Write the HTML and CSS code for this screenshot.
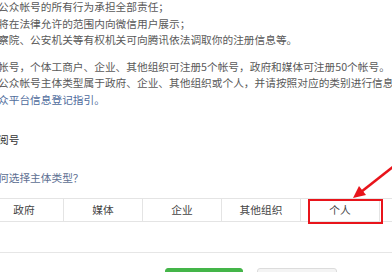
FILE: index.html
```html
<!DOCTYPE html>
<html lang="zh-CN">
    <head>
        <meta charset="UTF-8">
        <title>帐号类型</title>
        <link rel="stylesheet" href="styles.css">
    </head>
    <body>
        <div class="page">
            <p class="notice">
                公众帐号的所有行为承担全部责任；<br>
                将在法律允许的范围内向微信用户展示；<br>
                察院、公安机关等有权机关可向腾讯依法调取你的注册信息等。
            </p>
            <p class="notice">
                帐号，个体工商户、企业、其他组织可注册5个帐号，政府和媒体可注册50个帐号。<br>
                公众帐号主体类型属于政府、企业、其他组织或个人，并请按照对应的类别进行信息登记。<br>
                <a class="link" href="#">众平台信息登记指引。</a>
            </p>

            <h3 class="section-title">阅号</h3>
            <a class="help" href="#">何选择主体类型？</a>

            <div class="types">
                <div class="type">政府</div>
                <div class="type">媒体</div>
                <div class="type">企业</div>
                <div class="type">其他组织</div>
                <div class="type">个人</div>
            </div>

            <div class="actions">
                <button class="btn btn-primary">继续</button>
                <button class="btn btn-default">返回</button>
            </div>
        </div>

        <div class="mark-box"></div>
        <svg class="mark-arrow" width="52" height="50" viewBox="340 155 52 50">
            <line x1="394" y1="166" x2="361" y2="192" stroke="#e8141b" stroke-width="2.6"/>
            <polygon points="353,198 366,195 359,186" fill="#e8141b"/>
        </svg>
    </body>
</html>
```

FILE: styles.css
```css
body {
    margin: 0;
    padding: 0;
    background-color: #fff;
    font-family: "Microsoft YaHei", "Noto Sans CJK SC", sans-serif;
    font-size: 10.7px;
    line-height: 16.5px;
    color: #595959;
    overflow: hidden;
}

.page {
    margin: -1px 0 0 -2px;
    white-space: nowrap;
}

.notice {
    margin: 0 0 10px;
}

.link {
    color: #4f6c9c;
    text-decoration: none;
}

.section-title {
    margin: 24px 0 0;
    font-size: 10.7px;
    font-weight: normal;
    color: #333;
}

.help {
    display: block;
    margin-top: 21px;
    color: #5d6f92;
    text-decoration: none;
}

.types {
    display: flex;
    margin: 12px 0 0 -13px;
    border-top: 1px solid #e4e4e4;
    border-bottom: 1px solid #e4e4e4;
    width: 420px;
}

.type {
    width: 78px;
    height: 22px;
    line-height: 22px;
    text-align: center;
    color: #444;
    border-right: 1px solid #e4e4e4;
}

.actions {
    display: flex;
    gap: 14px;
    margin-top: 30px;
    padding: 15px 0 0 167px;
    border-top: 1px solid #e6e6e6;
}

.btn {
    width: 78px;
    height: 24px;
    border-radius: 3px;
    font-family: inherit;
    font-size: 10.7px;
}

.btn-primary {
    background-color: #44b549;
    border: 1px solid #44b549;
    color: #fff;
}

.btn-default {
    width: 80px;
    background-color: #f4f4f4;
    border: 1px solid #dcdcdc;
    color: #333;
}

.mark-box {
    position: absolute;
    left: 308px;
    top: 199px;
    width: 71px;
    height: 21px;
    border: 2px solid #e8141b;
}

.mark-arrow {
    position: absolute;
    left: 340px;
    top: 155px;
}
```
